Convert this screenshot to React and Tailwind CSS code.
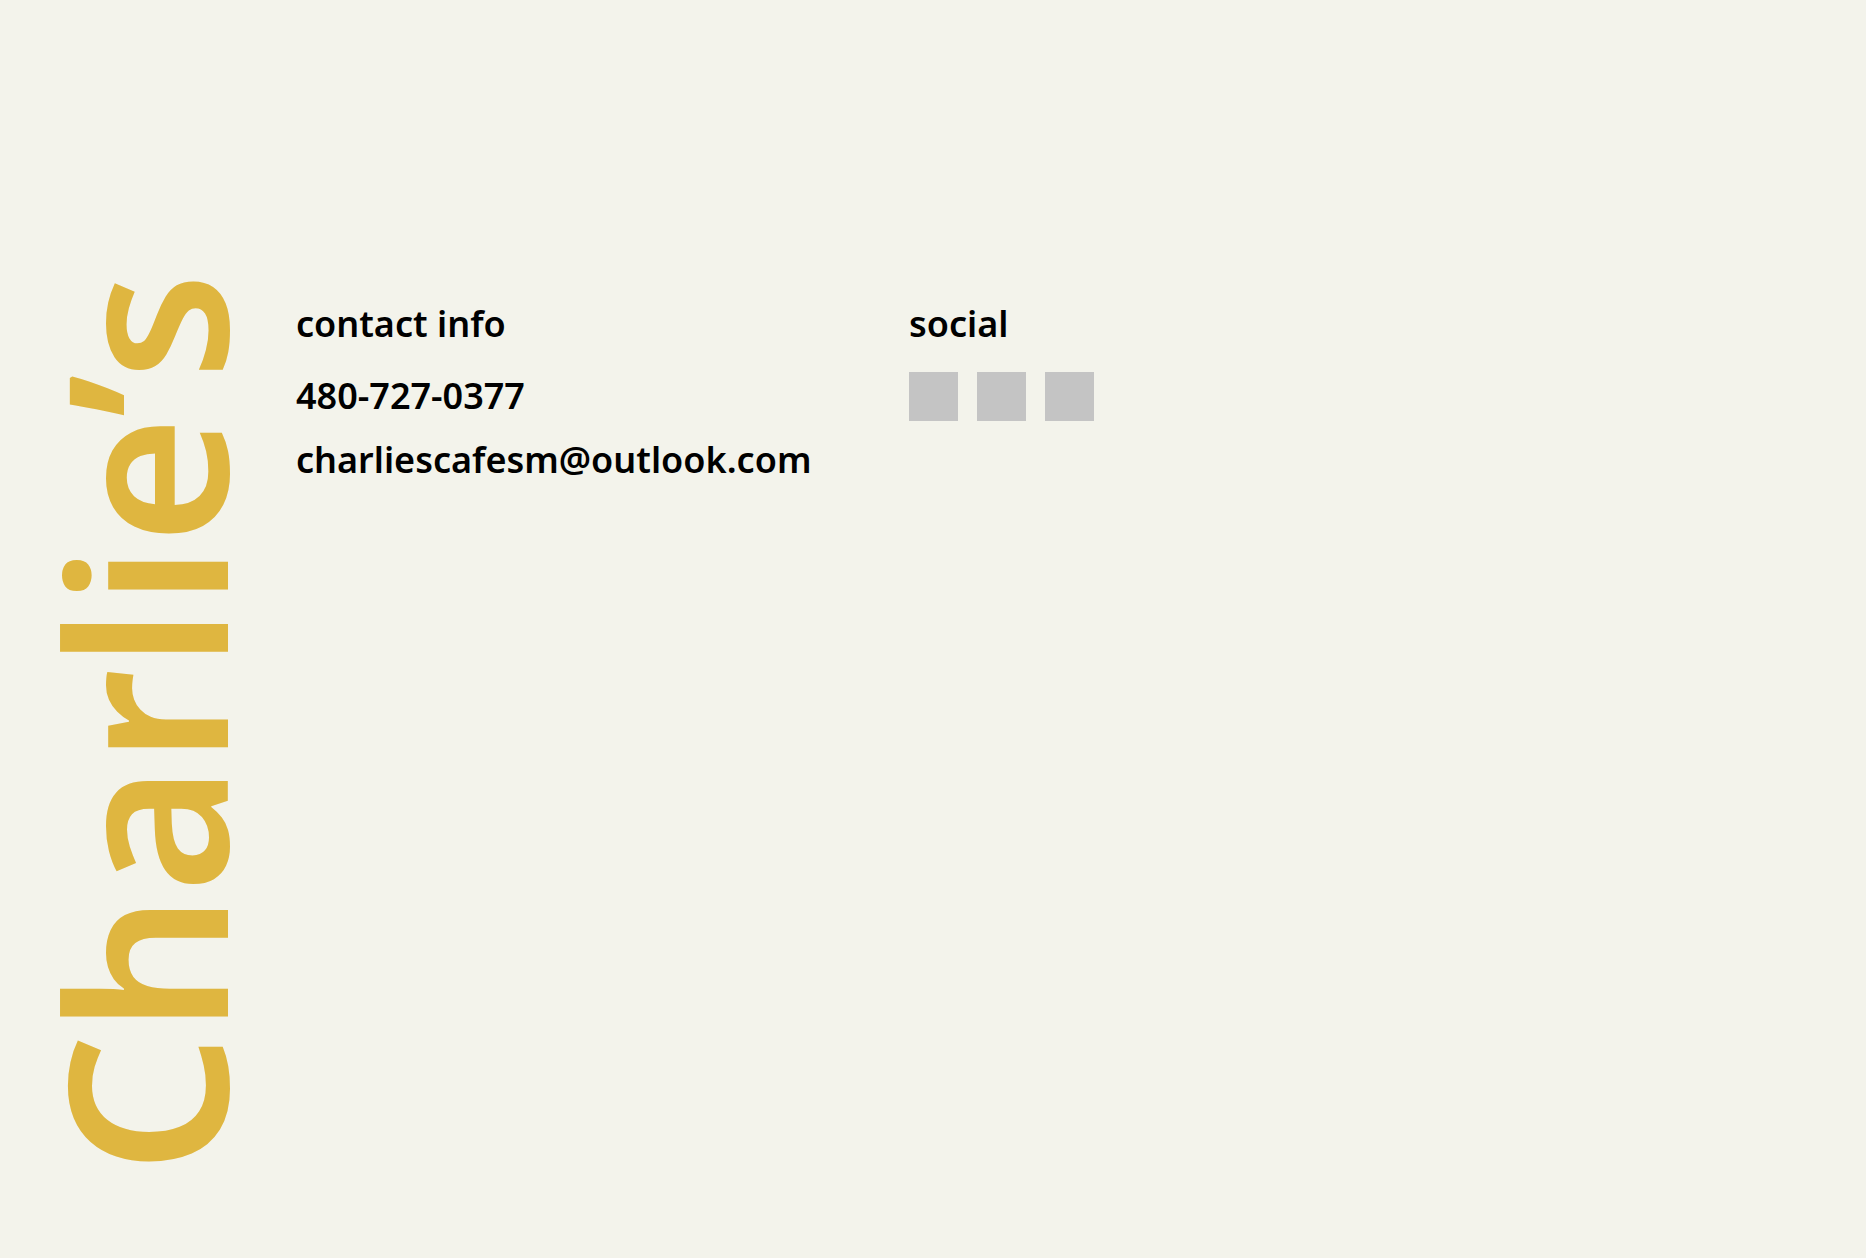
export default function App() {
  return (
    <main className="flex min-h-screen bg-[#f3f3eb] pl-7 font-['Noto_Sans',sans-serif] text-black">
      <h1 className="mb-[84px] w-[230px] shrink-0 rotate-180 self-end whitespace-nowrap text-[220px] leading-[230px] font-semibold text-[#dfb640] [writing-mode:vertical-rl]">
        Charlie’s
      </h1>
      <div className="mt-[300px] ml-[38px] flex text-[36px] leading-[48px] font-semibold">
        <section className="w-[613px]">
          <h2>contact info</h2>
          <a className="mt-6 block w-fit" href="tel:480-727-0377">480-727-0377</a>
          <a className="mt-4 block w-fit" href="mailto:charliescafesm@outlook.com">charliescafesm@outlook.com</a>
        </section>
        <section>
          <h2>social</h2>
          <div className="mt-6 flex gap-[19px]">
            <a href="#a" aria-label="Social" className="size-[49px] bg-[#c4c4c4]" />
            <a href="#b" aria-label="Social" className="size-[49px] bg-[#c4c4c4]" />
            <a href="#c" aria-label="Social" className="size-[49px] bg-[#c4c4c4]" />
          </div>
        </section>
      </div>
    </main>
  );
}
